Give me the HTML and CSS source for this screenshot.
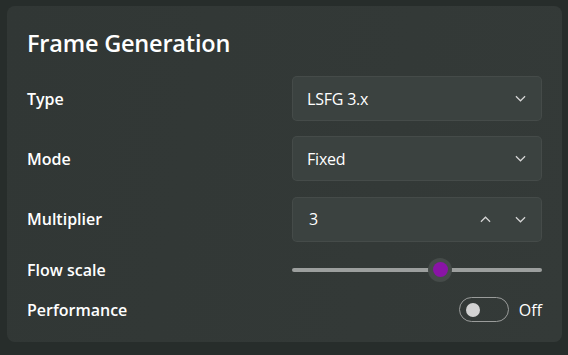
FILE: index.html
```html
<!DOCTYPE html>
<html lang="en">
<head>
    <meta charset="UTF-8">
    <title>Frame Generation</title>
    <link rel="stylesheet" href="styles.css">
</head>
<body>
    <section class="card">
        <h1 class="card-title">Frame Generation</h1>
        <div class="settings">
            <div class="label">Type</div>
            <div class="select">
                <span>LSFG 3.x</span>
                <svg class="chev" viewBox="0 0 12 7"><path d="M1 1 L6 6 L11 1"/></svg>
            </div>

            <div class="label">Mode</div>
            <div class="select">
                <span>Fixed</span>
                <svg class="chev" viewBox="0 0 12 7"><path d="M1 1 L6 6 L11 1"/></svg>
            </div>

            <div class="label">Multiplier</div>
            <div class="select number">
                <span>3</span>
                <div class="spin">
                    <svg class="chev" viewBox="0 0 12 7"><path d="M1 6 L6 1 L11 6"/></svg>
                    <svg class="chev" viewBox="0 0 12 7"><path d="M1 1 L6 6 L11 1"/></svg>
                </div>
            </div>

            <div class="label">Flow scale</div>
            <div class="slider">
                <div class="track"></div>
                <div class="thumb"><div class="thumb-dot"></div></div>
            </div>

            <div class="label">Performance</div>
            <div class="toggle-wrap">
                <div class="toggle"><div class="knob"></div></div>
                <span>Off</span>
            </div>
        </div>
    </section>
</body>
</html>
```

FILE: styles.css
```css
:root {
    --bg: #272d2b;
    --card: #323836;
    --field: #3b4240;
    --text: #ffffff;
    --accent: #8a14a6;
}
html, body {
    margin: 0;
    padding: 0;
    background: var(--bg);
    color: var(--text);
    font-family: 'Open Sans', 'Noto Sans', Arial, sans-serif;
    width: 568px;
    height: 355px;
    overflow: hidden;
}
.card {
    box-sizing: border-box;
    margin: 6px 0 0 7px;
    width: 555px;
    height: 336px;
    padding: 21px 20px 0 20px;
    border-radius: 8px;
    background: linear-gradient(100deg, #313735 0%, #343a38 100%);
}
.card-title {
    margin: 0;
    font-size: 23.5px;
    line-height: 32px;
    font-weight: 600;
    letter-spacing: -0.2px;
}
.settings {
    margin-top: 17px;
    display: grid;
    grid-template-columns: 1fr 250px;
    grid-template-rows: 45px 45px 46px 25px 25px;
    row-gap: 15px;
    align-items: center;
}
.label {
    font-size: 16px;
    font-weight: 600;
    letter-spacing: 0;
}
.select {
    box-sizing: border-box;
    height: 45px;
    display: flex;
    align-items: center;
    justify-content: space-between;
    padding: 0 15px 0 14px;
    background: var(--field);
    border: 1px solid rgba(255, 255, 255, 0.05);
    border-radius: 5px;
    font-size: 16px;
    letter-spacing: -0.2px;
}
.select.number {
    padding-left: 16px;
}
.chev {
    width: 11px;
    height: 7px;
    fill: none;
    stroke: #d6d6d6;
    stroke-width: 1.3;
}
.spin {
    display: flex;
    gap: 24px;
}
.slider {
    position: relative;
    height: 24px;
    display: flex;
    align-items: center;
}
.track {
    width: 100%;
    height: 4px;
    border-radius: 2px;
    background: #9c9f9e;
}
.thumb {
    position: absolute;
    left: 136px;
    top: 0;
    width: 24px;
    height: 24px;
    border-radius: 50%;
    background: #454b49;
    display: flex;
    align-items: center;
    justify-content: center;
}
.thumb-dot {
    width: 15px;
    height: 15px;
    border-radius: 50%;
    background: var(--accent);
}
.toggle-wrap {
    display: flex;
    align-items: center;
    justify-content: flex-end;
    gap: 10px;
    font-size: 16px;
}
.toggle {
    box-sizing: border-box;
    width: 50px;
    height: 25px;
    border: 1px solid #9a9c9b;
    border-radius: 13px;
    display: flex;
    align-items: center;
    padding-left: 6px;
}
.knob {
    width: 14px;
    height: 14px;
    border-radius: 50%;
    background: #d2d2d2;
}
```
